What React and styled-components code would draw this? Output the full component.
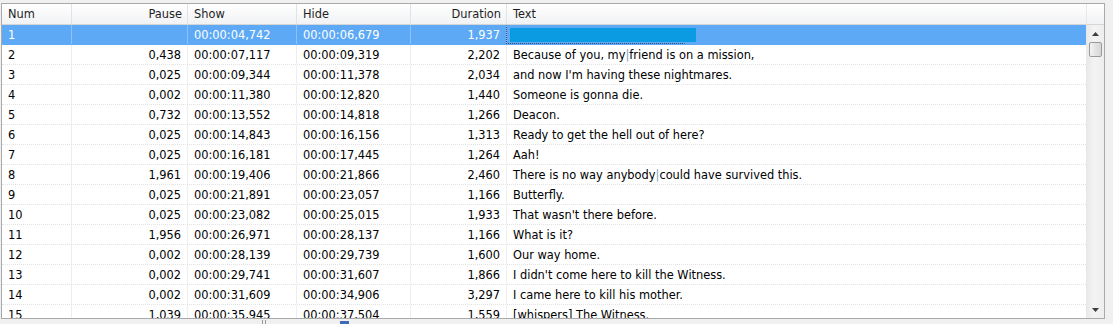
import React from "react";
import styled, { createGlobalStyle } from "styled-components";

const Global = createGlobalStyle`
  html, body { margin: 0; padding: 0; background: #f0f0f0; overflow: hidden; }
  body { font-family: Tahoma, "DejaVu Sans", "Liberation Sans", sans-serif; font-size: 11.4px; color: #000; }
`;

const Page = styled.div`
  width: 1113px;
  height: 324px;
  padding: 3px 8px 0 1px;
  box-sizing: border-box;
  display: flex;
  flex-direction: column;
`;

const Frame = styled.div`
  height: 316px;
  border: 1px solid #a9a9a9;
  background: #fff;
  display: flex;
  box-sizing: border-box;
  overflow: hidden;
`;

const ListArea = styled.div`
  flex: 1;
  display: flex;
  flex-direction: column;
  overflow: hidden;
`;

const cols = "70px 116px 109px 114px 96px 1fr";

const HeaderRow = styled.div`
  display: grid;
  grid-template-columns: ${cols};
  height: 21px;
  box-sizing: border-box;
  background: linear-gradient(#ffffff, #f1f2f4);
  border-bottom: 1px solid #d5d5d5;
  flex-shrink: 0;
`;

const HeaderCell = styled.div`
  display: flex;
  align-items: center;
  justify-content: ${(p) => (p.$right ? "flex-end" : "flex-start")};
  padding: 0 ${(p) => (p.$right ? "5px" : "0")} 0 ${(p) => (p.$right ? "0" : "6px")};
  border-right: 1px solid #e2e3e5;
  white-space: nowrap;
  color: #1e1e1e;
  &:last-child { border-right: none; }
`;

const Row = styled.div`
  display: grid;
  grid-template-columns: ${cols};
  height: 20px;
  box-sizing: border-box;
  flex-shrink: 0;
  background: ${(p) => (p.$selected ? "#5ea9f6" : "#fff")};
  color: ${(p) => (p.$selected ? "#fff" : "#000")};
  border-bottom: 1px dotted ${(p) => (p.$selected ? "#5ea9f6" : "#e2e2e2")};
`;

const Cell = styled.div`
  display: flex;
  align-items: center;
  justify-content: ${(p) => (p.$right ? "flex-end" : "flex-start")};
  padding: 0 ${(p) => (p.$right ? "6px" : "0")} 0 ${(p) => (p.$right ? "0" : "6px")};
  border-right: 1px solid ${(p) => (p.$selected ? "#8cc2f7" : "#eeeeee")};
  white-space: nowrap;
  overflow: hidden;
  &:last-child { border-right: none; }
`;

const FocusCell = styled.div`
  display: flex;
  align-items: center;
  padding-left: 3px;
  position: relative;
`;

const FocusRect = styled.div`
  position: absolute;
  left: -1px;
  top: 0;
  width: 179px;
  height: 19px;
  border: 1px dotted #3a4a66;
  border-top-color: transparent;
  border-right-color: transparent;
  box-sizing: border-box;
`;

const EditBox = styled.div`
  width: 186px;
  height: 14px;
  background: #0a9be2;
`;

const Bar = styled.span`
  color: #7b9fcf;
`;

const ScrollCol = styled.div`
  width: 17px;
  display: flex;
  flex-direction: column;
  border-left: 1px solid #e8e8e8;
`;

const Corner = styled.div`
  height: 21px;
  box-sizing: border-box;
  background: linear-gradient(#ffffff, #f1f2f4);
  border-bottom: 1px solid #d5d5d5;
`;

const Track = styled.div`
  flex: 1;
  background: linear-gradient(90deg, #e9e9e9, #f3f3f3 40%, #eeeeee);
  display: flex;
  flex-direction: column;
  align-items: center;
`;

const Arrow = styled.div`
  height: 17px;
  width: 100%;
  display: flex;
  align-items: center;
  justify-content: center;
`;

const Thumb = styled.div`
  width: 13px;
  height: 15px;
  box-sizing: border-box;
  border: 1px solid #9a9a9a;
  border-radius: 2px;
  background: linear-gradient(90deg, #f4f4f4, #e3e3e3 50%, #d6d6d6);
`;

const Spacer = styled.div`
  flex: 1;
`;

const BottomStrip = styled.div`
  height: 5px;
  position: relative;
`;

const Grip = styled.div`
  position: absolute;
  left: 261px;
  top: 1px;
  width: 4px;
  height: 4px;
  border-left: 1px solid #9a9a9a;
  border-right: 1px solid #9a9a9a;
  box-sizing: border-box;
`;

const BlueTab = styled.div`
  position: absolute;
  left: 339px;
  top: 2px;
  width: 9px;
  height: 3px;
  background: #3e6bb3;
`;

const rows = [
  ["1", "", "00:00:04,742", "00:00:06,679", "1,937", null],
  ["2", "0,438", "00:00:07,117", "00:00:09,319", "2,202", "Because of you, my|friend is on a mission,"],
  ["3", "0,025", "00:00:09,344", "00:00:11,378", "2,034", "and now I'm having these nightmares."],
  ["4", "0,002", "00:00:11,380", "00:00:12,820", "1,440", "Someone is gonna die."],
  ["5", "0,732", "00:00:13,552", "00:00:14,818", "1,266", "Deacon."],
  ["6", "0,025", "00:00:14,843", "00:00:16,156", "1,313", "Ready to get the hell out of here?"],
  ["7", "0,025", "00:00:16,181", "00:00:17,445", "1,264", "Aah!"],
  ["8", "1,961", "00:00:19,406", "00:00:21,866", "2,460", "There is no way anybody|could have survived this."],
  ["9", "0,025", "00:00:21,891", "00:00:23,057", "1,166", "Butterfly."],
  ["10", "0,025", "00:00:23,082", "00:00:25,015", "1,933", "That wasn't there before."],
  ["11", "1,956", "00:00:26,971", "00:00:28,137", "1,166", "What is it?"],
  ["12", "0,002", "00:00:28,139", "00:00:29,739", "1,600", "Our way home."],
  ["13", "0,002", "00:00:29,741", "00:00:31,607", "1,866", "I didn't come here to kill the Witness."],
  ["14", "0,002", "00:00:31,609", "00:00:34,906", "3,297", "I came here to kill his mother."],
  ["15", "1,039", "00:00:35,945", "00:00:37,504", "1,559", "[whispers] The Witness."],
];

function renderText(t) {
  const parts = t.split("|");
  return parts.map((p, i) => (
    <React.Fragment key={i}>
      {i > 0 && <Bar>|</Bar>}
      {p}
    </React.Fragment>
  ));
}

const UpIcon = () => (
  <svg width="7" height="4" viewBox="0 0 7 4"><path d="M0 4 L3.5 0 L7 4 Z" fill="#3c3c3c" /></svg>
);
const DownIcon = () => (
  <svg width="7" height="4" viewBox="0 0 7 4"><path d="M0 0 L3.5 4 L7 0 Z" fill="#3c3c3c" /></svg>
);

export default function App() {
  return (
    <Page>
      <Global />
      <Frame>
        <ListArea>
          <HeaderRow>
            <HeaderCell>Num</HeaderCell>
            <HeaderCell $right>Pause</HeaderCell>
            <HeaderCell>Show</HeaderCell>
            <HeaderCell>Hide</HeaderCell>
            <HeaderCell $right>Duration</HeaderCell>
            <HeaderCell>Text</HeaderCell>
          </HeaderRow>
          {rows.map((r, i) => {
            const sel = i === 0;
            return (
              <Row key={r[0]} $selected={sel}>
                <Cell $selected={sel}>{r[0]}</Cell>
                <Cell $selected={sel} $right>{r[1]}</Cell>
                <Cell $selected={sel}>{r[2]}</Cell>
                <Cell $selected={sel}>{r[3]}</Cell>
                <Cell $selected={sel} $right>{r[4]}</Cell>
                {sel ? (
                  <FocusCell>
                    <FocusRect />
                    <EditBox />
                  </FocusCell>
                ) : (
                  <Cell>{renderText(r[5])}</Cell>
                )}
              </Row>
            );
          })}
        </ListArea>
        <ScrollCol>
          <Corner />
          <Track>
            <Arrow><UpIcon /></Arrow>
            <Thumb />
            <Spacer />
            <Arrow><DownIcon /></Arrow>
          </Track>
        </ScrollCol>
      </Frame>
      <BottomStrip>
        <Grip />
        <BlueTab />
      </BottomStrip>
    </Page>
  );
}
